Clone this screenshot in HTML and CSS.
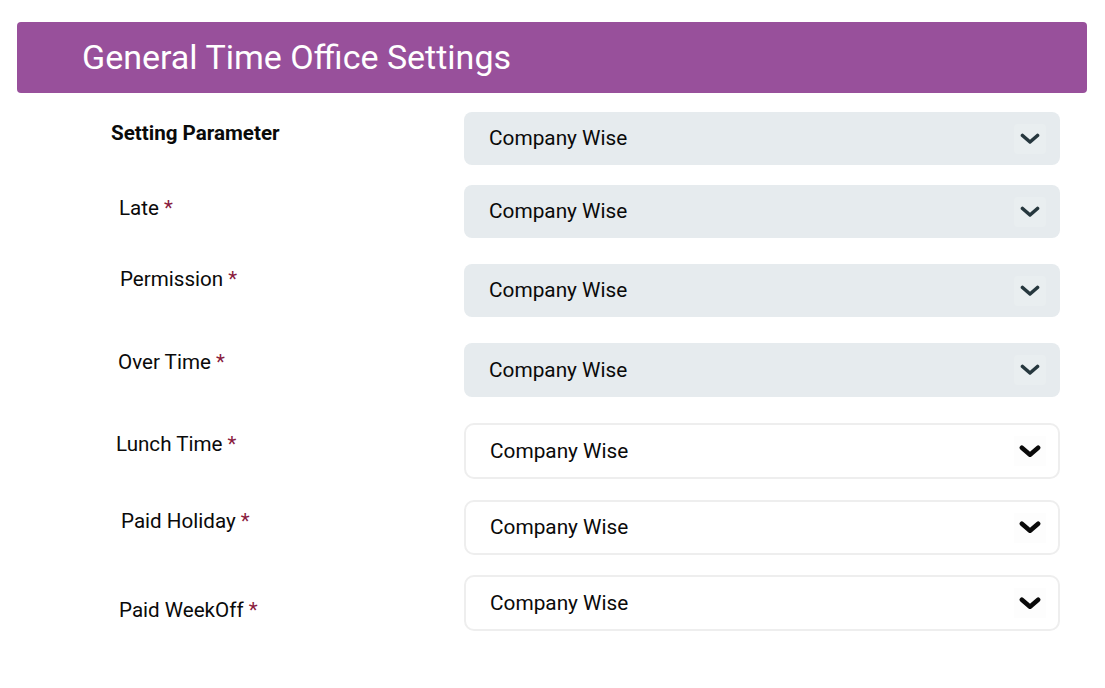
FILE: index.html
```html
<!DOCTYPE html>
<html>
<head>
<meta charset="utf-8">
<link rel="stylesheet" href="styles.css">
</head>
<body>
<div class="page">
  <div class="header"><h1 class="title">General Time Office Settings</h1></div>
  <div class="form">
    <div class="row r1">
      <div class="label l1 strong">Setting Parameter</div>
      <div class="select grey"><span class="value">Company Wise</span><span class="chev grey-chev"><svg viewBox="0 0 20 12" width="20" height="12"><path d="M2.5 2.5 L10 9 L17.5 2.5" fill="none" stroke="currentColor" stroke-width="3.6" stroke-linecap="round" stroke-linejoin="round"/></svg></span></div>
    </div>
    <div class="row r2">
      <div class="label l2">Late <span class="req">*</span></div>
      <div class="select grey"><span class="value">Company Wise</span><span class="chev grey-chev"><svg viewBox="0 0 20 12" width="20" height="12"><path d="M2.5 2.5 L10 9 L17.5 2.5" fill="none" stroke="currentColor" stroke-width="3.6" stroke-linecap="round" stroke-linejoin="round"/></svg></span></div>
    </div>
    <div class="row r3">
      <div class="label l3">Permission <span class="req">*</span></div>
      <div class="select grey"><span class="value">Company Wise</span><span class="chev grey-chev"><svg viewBox="0 0 20 12" width="20" height="12"><path d="M2.5 2.5 L10 9 L17.5 2.5" fill="none" stroke="currentColor" stroke-width="3.6" stroke-linecap="round" stroke-linejoin="round"/></svg></span></div>
    </div>
    <div class="row r4">
      <div class="label l4">Over Time <span class="req">*</span></div>
      <div class="select grey tall"><span class="value">Company Wise</span><span class="chev grey-chev"><svg viewBox="0 0 20 12" width="20" height="12"><path d="M2.5 2.5 L10 9 L17.5 2.5" fill="none" stroke="currentColor" stroke-width="3.6" stroke-linecap="round" stroke-linejoin="round"/></svg></span></div>
    </div>
    <div class="row r5">
      <div class="label l5">Lunch Time <span class="req">*</span></div>
      <div class="select white"><span class="value">Company Wise</span><span class="chev black-chev"><svg viewBox="0 0 20 12" width="22" height="13"><path d="M2.5 2.5 L10 9 L17.5 2.5" fill="none" stroke="currentColor" stroke-width="4.2" stroke-linecap="round" stroke-linejoin="round"/></svg></span></div>
    </div>
    <div class="row r6">
      <div class="label l6">Paid Holiday <span class="req">*</span></div>
      <div class="select white"><span class="value">Company Wise</span><span class="chev black-chev"><svg viewBox="0 0 20 12" width="22" height="13"><path d="M2.5 2.5 L10 9 L17.5 2.5" fill="none" stroke="currentColor" stroke-width="4.2" stroke-linecap="round" stroke-linejoin="round"/></svg></span></div>
    </div>
    <div class="row r7">
      <div class="label l7">Paid WeekOff <span class="req">*</span></div>
      <div class="select white"><span class="value">Company Wise</span><span class="chev black-chev"><svg viewBox="0 0 20 12" width="22" height="13"><path d="M2.5 2.5 L10 9 L17.5 2.5" fill="none" stroke="currentColor" stroke-width="4.2" stroke-linecap="round" stroke-linejoin="round"/></svg></span></div>
    </div>
  </div>
</div>
</body>
</html>
```

FILE: styles.css
```css
* { box-sizing: border-box; }
html, body { margin: 0; padding: 0; background: #ffffff; }
body { font-family: Roboto, "Liberation Sans", Arial, sans-serif; color: #0a0a0a; }
.page { width: 1105px; height: 688px; padding-top: 22px; }
.header {
  margin: 0 18px 0 17px;
  height: 71px;
  background: #98509b;
  border-radius: 4px;
  display: flex;
  align-items: center;
  padding-left: 65px;
}
.title {
  margin: 0;
  font-weight: 400;
  font-size: 34px;
  color: #ffffff;
  padding-bottom: 1px;
}
.form { display: flex; flex-direction: column; }
.row { display: flex; align-items: flex-start; }
.r1 { margin-top: 19px; }
.r2 { margin-top: 20px; }
.r3, .r4 { margin-top: 26px; }
.r5 { margin-top: 26px; }
.r6 { margin-top: 21px; }
.r7 { margin-top: 20px; }
.label {
  width: 464px;
  font-size: 20.6px;
  line-height: 24px;
  color: #0a0a0a;
  flex: none;
}
.strong { font-weight: 700; font-size: 20.6px; }
.l1 { padding-left: 111px; padding-top: 9px; }
.l2 { padding-left: 119px; padding-top: 11px; }
.l3 { padding-left: 120px; padding-top: 3px; }
.l4 { padding-left: 118px; padding-top: 7px; }
.l5 { padding-left: 116px; padding-top: 9px; }
.l6 { padding-left: 121px; padding-top: 9px; }
.l7 { padding-left: 119px; padding-top: 23px; }
.req { color: #8a1c40; }
.select {
  width: 596px;
  height: 53px;
  display: flex;
  align-items: center;
  justify-content: space-between;
  padding-left: 25px;
  padding-right: 14px;
}
.select.tall { height: 54px; }
.grey { background: #e6ebee; border-radius: 8px; }
.white { background: #ffffff; border: 2px solid #eeeeee; border-radius: 10px; height: 56px; padding-left: 24px; padding-right: 12px; }
.r6 .white { height: 55px; }
.value { font-size: 20.8px; color: #0a0a0a; padding-bottom: 1px; }
.chev { display: flex; align-items: center; justify-content: center; width: 32px; height: 30px; }
.grey-chev { color: #26373e; background: #e9eef0; border-radius: 4px; }
.black-chev { color: #0a0a0a; background: #fdfdfd; }
```
